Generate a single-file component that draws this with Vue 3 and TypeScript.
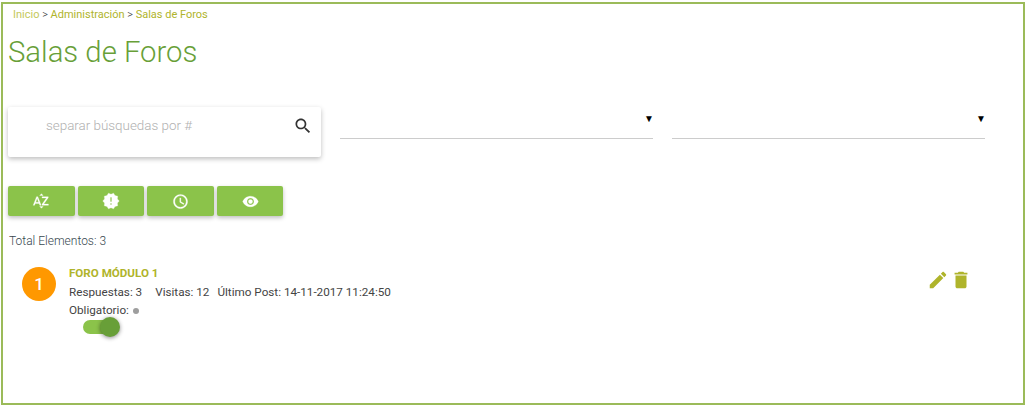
<script setup lang="ts">
interface SortButton {
  name: string
  size: number
  path: string
}

const crumbs = ["Inicio", "Administración", "Salas de Foros"]

const sortButtons: SortButton[] = [
  { name: "az", size: 18, path: "M14.94 4.66h-4.72l2.36-2.36zm-4.69 14.71h4.66l-2.33 2.33zM6.1 6.27L1.6 17.73h1.84l.92-2.45h5.11l.92 2.45h1.84L7.74 6.27H6.1zm-1.13 7.37l1.94-5.18 1.94 5.18H4.97zm10.76 2.5h6.12v1.59h-8.53v-1.29l5.92-8.56h-5.88v-1.6h8.3v1.26l-5.93 8.6z" },
  { name: "new", size: 18, path: "M23 12l-2.44-2.78.34-3.68-3.61-.82-1.89-3.18L12 3 8.6 1.54 6.71 4.72l-3.61.81.34 3.68L1 12l2.44 2.78-.34 3.69 3.61.82 1.89 3.18L12 21l3.4 1.46 1.89-3.18 3.61-.82-.34-3.68L23 12zm-10 5h-2v-2h2v2zm0-4h-2V7h2v6z" },
  { name: "time", size: 17, path: "M11.99 2C6.47 2 2 6.48 2 12s4.47 10 9.99 10C17.52 22 22 17.52 22 12S17.52 2 11.99 2zM12 20c-4.42 0-8-3.58-8-8s3.58-8 8-8 8 3.58 8 8-3.58 8-8 8zM12.5 7H11v6l5.25 3.15.75-1.23-4.5-2.67z" },
  { name: "views", size: 17, path: "M12 4.5C7 4.5 2.73 7.61 1 12c1.73 4.39 6 7.5 11 7.5s9.27-3.11 11-7.5c-1.73-4.39-6-7.5-11-7.5zM12 17c-2.76 0-5-2.24-5-5s2.24-5 5-5 5 2.24 5 5-2.24 5-5 5zm0-8c-1.66 0-3 1.34-3 3s1.34 3 3 3 3-1.34 3-3-1.34-3-3-3z" },
]

const foro = {
  pos: 1,
  title: "FORO MÓDULO 1",
  respuestas: 3,
  visitas: 12,
  ultimo: "14-11-2017 11:24:50",
}
</script>

<template>
  <div class="frame">
    <div class="crumbs">
      <template v-for="(c, i) in crumbs" :key="c">
        <span class="sep" v-if="i > 0"> &gt; </span><a class="crumb" :class="{ first: i === 0 }">{{ c }}</a>
      </template>
    </div>
    <h1 class="title">Salas de Foros</h1>

    <div class="filters">
      <div class="search">
        <span class="placeholder">separar búsquedas por #</span>
        <svg class="search-icon" viewBox="0 0 24 24" width="20" height="20">
          <path d="M15.5 14h-.79l-.28-.27C15.41 12.59 16 11.11 16 9.5 16 5.91 13.09 3 9.5 3S3 5.91 3 9.5 5.91 16 9.5 16c1.61 0 3.09-.59 4.23-1.57l.27.28v.79l5 4.99L20.49 19l-4.99-5zm-6 0C7.01 14 5 11.99 5 9.5S7.01 5 9.5 5 14 7.01 14 9.5 11.99 14 9.5 14z" />
        </svg>
      </div>
      <div class="select"><span class="arrow">▼</span></div>
      <div class="select"><span class="arrow">▼</span></div>
    </div>

    <div class="buttons">
      <button v-for="b in sortButtons" :key="b.name" class="btn" type="button">
        <svg viewBox="0 0 24 24" :width="b.size" :height="b.size"><path :d="b.path" /></svg>
      </button>
    </div>

    <div class="total">Total Elementos: 3</div>

    <div class="item">
      <div class="badge">{{ foro.pos }}</div>
      <div class="info">
        <div class="foro-title">{{ foro.title }}</div>
        <div class="stats">
          <span>Respuestas: {{ foro.respuestas }}</span>
          <span>Visitas: {{ foro.visitas }}</span>
          <span>Último Post: {{ foro.ultimo }}</span>
        </div>
        <div class="oblig">Obligatorio: <i class="dot"></i></div>
        <div class="switch"><span class="knob"></span></div>
      </div>
      <div class="actions">
        <svg viewBox="0 0 24 24" width="22" height="22">
          <path d="M3 17.25V21h3.75L17.81 9.94l-3.75-3.75L3 17.25zM20.71 7.04c.39-.39.39-1.02 0-1.41l-2.34-2.34c-.39-.39-1.02-.39-1.41 0l-1.83 1.83 3.75 3.75 1.83-1.83z" />
        </svg>
        <svg viewBox="0 0 24 24" width="22" height="22">
          <path d="M6 19c0 1.1.9 2 2 2h8c1.1 0 2-.9 2-2V7H6v12zM19 4h-3.5l-1-1h-5l-1 1H5v2h14V4z" />
        </svg>
      </div>
    </div>
  </div>
</template>

<style>
html,
body {
  margin: 0;
  background: #fff;
}
</style>

<style scoped>
.frame {
  box-sizing: border-box;
  width: 1024px;
  height: 403px;
  margin: 2px 0 0 1px;
  padding: 4px 5px 0 5px;
  border: 2px solid #9bbb59;
  font-family: Roboto, "Liberation Sans", sans-serif;
  color: #333;
  overflow: hidden;
}

.crumbs {
  padding-left: 5px;
  font-size: 11px;
  line-height: 14px;
  font-weight: 300;
  color: #333;
}

.crumb {
  color: #afb42b;
  font-weight: 400;
}

.crumb.first {
  color: #c4c85a;
}

.title {
  margin: 13px 0 0;
  font-size: 29.3px;
  line-height: 34px;
  font-weight: 300;
  color: #689f38;
}

.filters {
  display: flex;
  gap: 19px;
  margin-top: 38px;
}

.search {
  display: flex;
  justify-content: space-between;
  box-sizing: border-box;
  width: 313px;
  height: 50px;
  padding: 9px 8px 0 38px;
  border-radius: 2px;
  background: #fff;
  box-shadow: 0 2px 5px rgba(0, 0, 0, 0.26);
}

.placeholder {
  font-size: 13.4px;
  line-height: 20px;
  font-weight: 300;
  color: #b0b0b0;
}

.search-icon {
  fill: #333;
}

.select {
  display: flex;
  justify-content: flex-end;
  box-sizing: border-box;
  width: 313px;
  height: 32px;
  padding-top: 6px;
  border-bottom: 1px solid #ccc;
}

.arrow {
  margin-right: -1px;
  font-size: 10px;
  line-height: 12px;
  color: #000;
}

.buttons {
  display: flex;
  gap: 3px;
  margin-top: 29px;
}

.btn {
  display: flex;
  align-items: center;
  justify-content: center;
  width: 66.6px;
  height: 30px;
  padding: 0;
  border: 0;
  border-radius: 2px;
  background: #8bc34a;
  box-shadow: 0 2px 4px rgba(0, 0, 0, 0.25);
}

.btn svg {
  fill: #fff;
  stroke: #fff;
  stroke-width: 0.4;
}

.total {
  margin-top: 18px;
  padding-left: 1px;
  font-size: 12px;
  line-height: 14px;
  font-weight: 300;
  color: #37474f;
}

.item {
  display: flex;
  margin-top: 15px;
  padding-left: 14px;
}

.badge {
  flex: none;
  width: 34px;
  height: 34px;
  margin-top: 4px;
  border-radius: 50%;
  background: #ff9800;
  color: #fff;
  font-size: 17px;
  font-weight: 500;
  line-height: 34px;
  text-align: center;
}

.info {
  flex: 1;
  margin-left: 13px;
  font-size: 11.7px;
  color: #444;
}

.foro-title {
  margin-top: 3px;
  font-size: 11.6px;
  line-height: 14px;
  font-weight: 700;
  color: #afb42b;
}

.stats {
  display: flex;
  gap: 13px;
  margin-top: 5px;
  line-height: 14px;
}

.stats span:last-child {
  margin-left: -5px;
}

.oblig {
  margin-top: 4px;
  line-height: 14px;
}

.dot {
  display: inline-block;
  width: 6px;
  height: 6px;
  margin-left: 1px;
  border-radius: 50%;
  background: #9e9e9e;
}

.switch {
  position: relative;
  width: 34px;
  height: 14px;
  margin: 3px 0 0 14px;
  border-radius: 7px;
  background: #8bc34a;
}

.knob {
  position: absolute;
  top: -3px;
  right: -3px;
  width: 20px;
  height: 20px;
  border-radius: 50%;
  background: #689f38;
  box-shadow: 0 1px 4px rgba(0, 0, 0, 0.45);
}

.actions {
  display: flex;
  gap: 1px;
  margin: 6px 46px 0 0;
}

.actions svg {
  fill: #afb42b;
}
</style>
